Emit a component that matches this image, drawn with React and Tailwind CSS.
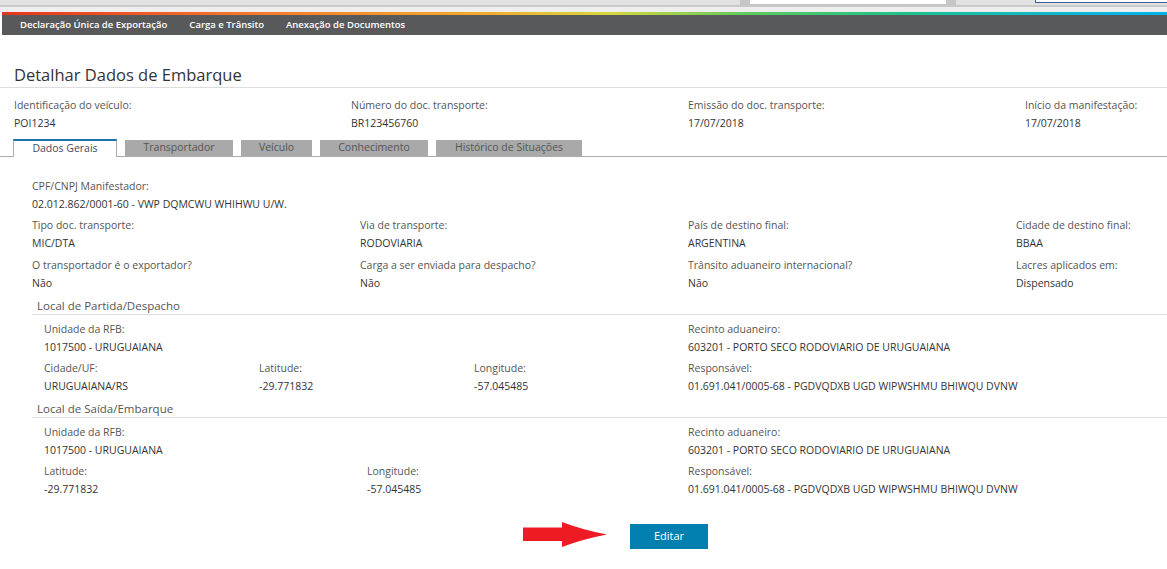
import React from 'react';

const Field = ({ label, value }) => (
  <div>
    <div className="text-[10.5px] leading-[18px] text-[#555]">{label}</div>
    <div className="text-[10.5px] leading-[18px] text-[#333]">{value}</div>
  </div>
);

const tabs = ['Transportador', 'Veículo', 'Conhecimento', 'Histórico de Situações'];
const tabWidths = ['w-[108px]', 'w-[71px]', 'w-[108px]', 'w-[146px]'];

export default function App() {
  return (
    <div className="w-[1167px] h-[569px] overflow-hidden bg-white font-['Open_Sans',sans-serif]">
      <div className="w-[1338px]">
        {/* browser-ish top strip */}
        <div className="h-[12px] flex flex-col">
          <div className="relative h-[5px] bg-[#e1e1e1]">
            <div className="absolute left-[740px] top-0 w-[216px] h-[6px] bg-[#c6c6c6]">
              <div className="ml-[10px] w-[196px] h-[4px] bg-white"></div>
            </div>
            <div className="absolute left-[1035px] top-0 w-[400px] h-[3px] bg-white border-l border-b border-[#3b5a98]"></div>
          </div>
          <div className="h-[2px] bg-[#c9c9c9]"></div>
          <div className="flex-1 bg-[#eeeeee]"></div>
        </div>
        <div className="ml-[2px] h-[3px] w-[1165px] bg-[linear-gradient(to_right,#e5341d_0%,#f4752b_20%,#f3a62e_40%,#d9d63d_52%,#5fcb5e_64%,#1fc28a_77%,#0ab6e2_95%,#00b4e8_100%)]"></div>
        <nav className="ml-[2px] h-[20px] bg-[#58595b] flex items-center pl-[18px] gap-[22px] text-[9.5px] font-semibold text-white">
          <span>Declaração Única de Exportação</span>
          <span>Carga e Trânsito</span>
          <span>Anexação de Documentos</span>
        </nav>

        <h1 className="mt-[28px] pl-[14px] text-[16.5px] leading-[24px] font-normal text-[#333] border-b border-[#ddd]">
          Detalhar Dados de Embarque
        </h1>

        <div className="mt-[8px] pl-[14px] grid grid-cols-[337px_337px_337px_1fr]">
          <Field label="Identificação do veículo:" value="POI1234" />
          <Field label="Número do doc. transporte:" value="BR123456760" />
          <Field label="Emissão do doc. transporte:" value="17/07/2018" />
          <Field label="Início da manifestação:" value="17/07/2018" />
        </div>

        <div className="mt-[7px] flex items-end gap-[8px] pl-[13px] border-b border-[#aaa] h-[18px]">
          <div className="-mb-px w-[104px] h-[18px] bg-white border-t-2 border-x border-t-[#1c75a8] border-x-[#aaa] flex items-center justify-center text-[10.5px] text-[#3d4b63]">
            Dados Gerais
          </div>
          {tabs.map((t, i) => (
            <div key={t} className={`${tabWidths[i]} h-[16px] bg-[#a9a9a9] flex items-center justify-center text-[10.5px] text-[#555]`}>
              {t}
            </div>
          ))}
        </div>

        <div className="pt-[20px] pl-[32px]">
          <Field label="CPF/CNPJ Manifestador:" value="02.012.862/0001-60 - VWP DQMCWU WHIHWU U/W." />
          <div className="mt-[3px] grid grid-cols-[328px_328px_328px_1fr] gap-y-[4px]">
            <Field label="Tipo doc. transporte:" value="MIC/DTA" />
            <Field label="Via de transporte:" value="RODOVIARIA" />
            <Field label="País de destino final:" value="ARGENTINA" />
            <Field label="Cidade de destino final:" value="BBAA" />
            <Field label="O transportador é o exportador?" value="Não" />
            <Field label="Carga a ser enviada para despacho?" value="Não" />
            <Field label="Trânsito aduaneiro internacional?" value="Não" />
            <Field label="Lacres aplicados em:" value="Dispensado" />
          </div>

          <div className="mt-[5px] pl-[5px] text-[11.5px] leading-[17px] text-[#555] border-b border-[#ddd]">
            Local de Partida/Despacho
          </div>
          <div className="pt-[5px] pl-[12px] grid grid-cols-[644px_1fr]">
            <div>
              <Field label="Unidade da RFB:" value="1017500 - URUGUAIANA" />
              <div className="mt-[3px] grid grid-cols-[215px_215px_1fr]">
                <Field label="Cidade/UF:" value="URUGUAIANA/RS" />
                <Field label="Latitude:" value="-29.771832" />
                <Field label="Longitude:" value="-57.045485" />
              </div>
            </div>
            <div>
              <Field label="Recinto aduaneiro:" value="603201 - PORTO SECO RODOVIARIO DE URUGUAIANA" />
              <div className="mt-[3px]">
                <Field label="Responsável:" value="01.691.041/0005-68 - PGDVQDXB UGD WIPWSHMU BHIWQU DVNW" />
              </div>
            </div>
          </div>

          <div className="mt-[5px] pl-[5px] text-[11.5px] leading-[17px] text-[#555] border-b border-[#ddd]">
            Local de Saída/Embarque
          </div>
          <div className="pt-[5px] pl-[12px] grid grid-cols-[644px_1fr]">
            <div>
              <Field label="Unidade da RFB:" value="1017500 - URUGUAIANA" />
              <div className="mt-[3px] grid grid-cols-[323px_1fr]">
                <Field label="Latitude:" value="-29.771832" />
                <Field label="Longitude:" value="-57.045485" />
              </div>
            </div>
            <div>
              <Field label="Recinto aduaneiro:" value="603201 - PORTO SECO RODOVIARIO DE URUGUAIANA" />
              <div className="mt-[3px]">
                <Field label="Responsável:" value="01.691.041/0005-68 - PGDVQDXB UGD WIPWSHMU BHIWQU DVNW" />
              </div>
            </div>
          </div>
        </div>

        <div className="mt-[24px] flex justify-center">
          <div className="relative">
            <svg className="absolute right-full mr-[23px] top-0" width="84" height="25" viewBox="0 0 84 25">
              <path d="M0 5.5 H39 V0 Q60 8 84 12.5 Q60 17 39 25 V19 H0 Z" fill="#ed1c24" />
            </svg>
            <button className="w-[78px] h-[25px] bg-[#007fb0] text-white text-[11px]">Editar</button>
          </div>
        </div>
      </div>
    </div>
  );
}
